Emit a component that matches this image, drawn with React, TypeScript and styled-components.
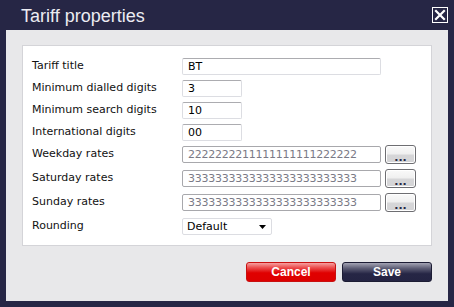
import styled, { createGlobalStyle } from 'styled-components'

const GlobalStyle = createGlobalStyle`
  html, body {
    margin: 0;
    padding: 0;
    background: #262645;
  }
  body {
    font-family: "DejaVu Sans", Verdana, sans-serif;
  }
`

const rateRows = [
  { label: 'Weekday rates', value: '2222222211111111111222222' },
  { label: 'Saturday rates', value: '3333333333333333333333333' },
  { label: 'Sunday rates', value: '3333333333333333333333333' },
]

const App = () => {
  return (
    <Dialog>
      <GlobalStyle />
      <TitleBar>
        <Title>Tariff properties</Title>
        <CloseButton aria-label="Close">
          <svg width="12" height="12" viewBox="0 0 12 12">
            <path d="M2 2 L10 10 M10 2 L2 10" stroke="#fff" strokeWidth="2.2" strokeLinecap="square" />
          </svg>
        </CloseButton>
      </TitleBar>
      <Body>
        <Panel>
          <Row>
            <Label>Tariff title</Label>
            <TextInput $width={199} defaultValue="BT" />
          </Row>
          <Row>
            <Label>Minimum dialled digits</Label>
            <TextInput $width={60} defaultValue="3" />
          </Row>
          <Row>
            <Label>Minimum search digits</Label>
            <TextInput $width={60} defaultValue="10" />
          </Row>
          <Row>
            <Label>International digits</Label>
            <TextInput $width={60} defaultValue="00" />
          </Row>
          {rateRows.map((r) => (
            <Row key={r.label} $tall>
              <Label>{r.label}</Label>
              <RateInput readOnly value={r.value} />
              <DotsButton>...</DotsButton>
            </Row>
          ))}
          <Row $last>
            <Label>Rounding</Label>
            <SelectBox>
              <span>Default</span>
              <svg width="7" height="4" viewBox="0 0 7 4">
                <path d="M0 0 H7 L3.5 4 Z" fill="#000" />
              </svg>
            </SelectBox>
          </Row>
        </Panel>
        <Actions>
          <ActionButton $kind="cancel">Cancel</ActionButton>
          <ActionButton $kind="save">Save</ActionButton>
        </Actions>
      </Body>
    </Dialog>
  )
}

const Dialog = styled.div`
  width: 454px;
  height: 307px;
  background: #262645;
  display: flex;
  flex-direction: column;
`
const TitleBar = styled.div`
  height: 30px;
  display: flex;
  align-items: flex-start;
  justify-content: space-between;
  padding: 0 6px 0 21px;
  box-sizing: border-box;
`
const Title = styled.h1`
  margin: 0;
  font-family: "Liberation Sans", Arial, sans-serif;
  font-weight: normal;
  font-size: 18px;
  line-height: 20px;
  padding-top: 6px;
  color: #ececf2;
`
const CloseButton = styled.button`
  margin-top: 7px;
  width: 16px;
  height: 16px;
  padding: 0;
  border: 1px solid #fff;
  background: #262645;
  display: flex;
  align-items: center;
  justify-content: center;
`
const Body = styled.div`
  margin: 0 6px 6px;
  flex: 1;
  background: #e8e8ea;
  padding: 15px 16px 0 16px;
  display: flex;
  flex-direction: column;
`
const Panel = styled.div`
  background: #fff;
  border: 1px solid #d4d4d8;
  height: 201px;
  box-sizing: border-box;
  padding: 12px 9px 0;
  display: flex;
  flex-direction: column;
`
const Row = styled.div<{ $tall?: boolean; $last?: boolean }>`
  display: flex;
  align-items: flex-start;
  height: ${(p) => (p.$last ? 17 : p.$tall ? 24 : 22)}px;
`
const Label = styled.label`
  width: 150px;
  flex-shrink: 0;
  font-size: 11px;
  line-height: 16px;
  color: #111;
`
const TextInput = styled.input<{ $width: number }>`
  width: ${(p) => p.$width}px;
  height: 17px;
  box-sizing: border-box;
  border: 1px solid #dcdde2;
  border-top-color: #acacb0;
  border-radius: 2px;
  padding: 0 5px;
  font-family: "DejaVu Sans", Verdana, sans-serif;
  font-size: 11px;
  color: #000;
  outline: none;
`
const RateInput = styled.input`
  width: 199px;
  height: 17px;
  box-sizing: border-box;
  border: 1px solid #a8a8ac;
  border-radius: 2px;
  padding: 0 5px;
  font-family: "DejaVu Sans", Verdana, sans-serif;
  font-size: 11px;
  letter-spacing: -0.25px;
  color: #7a7a86;
  background: #fff;
  outline: none;
`
const DotsButton = styled.button`
  margin: -1px 0 0 4px;
  width: 31px;
  height: 19px;
  box-sizing: border-box;
  border: 1px solid #6e6e72;
  border-radius: 3px;
  background: linear-gradient(#fafafa 0%, #f0f0f0 45%, #d6d6d8 55%, #d4d4d6 100%);
  box-shadow: inset 0 0 0 1px #fff;
  color: #262645;
  font-family: "DejaVu Sans", Verdana, sans-serif;
  font-size: 11px;
  font-weight: bold;
  line-height: 10px;
  padding: 6px 0 0;
  text-align: center;
`
const SelectBox = styled.div`
  width: 90px;
  height: 17px;
  box-sizing: border-box;
  border: 1px solid #dcdde2;
  border-radius: 2px;
  padding: 0 5px 0 4px;
  display: flex;
  align-items: center;
  justify-content: space-between;
  font-size: 11px;
  color: #000;
`
const Actions = styled.div`
  display: flex;
  justify-content: flex-end;
  gap: 6px;
  margin-top: 16px;
`
const ActionButton = styled.button<{ $kind: 'cancel' | 'save' }>`
  width: 90px;
  height: 20px;
  box-sizing: border-box;
  border-radius: 3px;
  border: 1px solid ${(p) => (p.$kind === 'cancel' ? '#c81010' : '#1c1c34')};
  background: ${(p) =>
    p.$kind === 'cancel'
      ? 'linear-gradient(#f6a0a0 0%, #ec5050 25%, #e00000 55%, #dd0000 100%)'
      : 'linear-gradient(#a4a4b4 0%, #5c5c74 30%, #262645 60%, #242443 100%)'};
  color: #fff;
  font-family: "Liberation Sans", Arial, sans-serif;
  font-weight: bold;
  font-size: 12px;
  padding: 0;
`

export default App
